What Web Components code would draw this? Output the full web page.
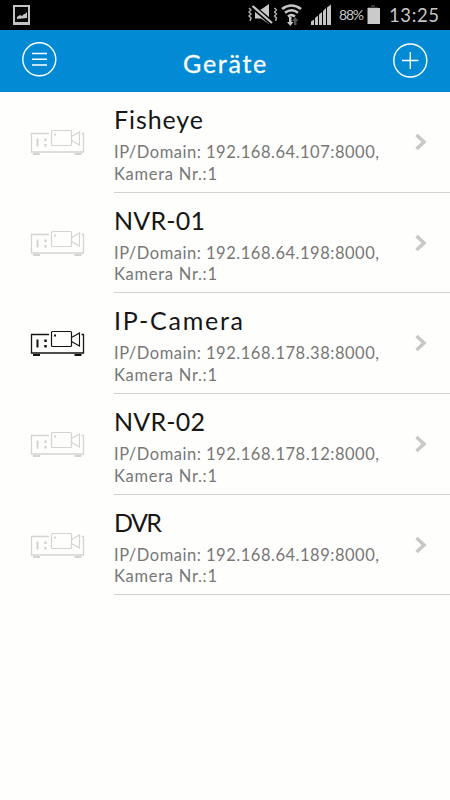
<!DOCTYPE html>
<html lang="de">
<head>
<meta charset="utf-8">
<title>Geräte</title>
<style>
    body {
        margin: 0;
        background: #fefefd;
        font-family: Lato, "Open Sans", sans-serif;
    }
</style>
</head>
<body>
<device-app></device-app>

<script>
// single line of text, spaced out to the width given in the attribute
class FitText extends HTMLElement {
    constructor() {
        super();
        this.attachShadow({ mode: "open" });
        this.shadowRoot.innerHTML = `
            <style>
                :host { display: block; white-space: nowrap; }
                span { display: inline-block; }
            </style>
            <span><slot></slot></span>`;
    }

    connectedCallback() {
        const span = this.shadowRoot.querySelector("span");
        const width = Number(this.getAttribute("width"));
        const count = this.textContent.length;
        const gap = (width - span.getBoundingClientRect().width) / (count - 1);
        span.style.letterSpacing = gap + "px";
        this.style.width = width + "px";
    }
}

class StatusBar extends HTMLElement {
    constructor() {
        super();
        this.attachShadow({ mode: "open" });
        this.shadowRoot.innerHTML = `
            <style>
                :host { display: flex; height: 30px; background: #000; color: #c6c6c6; }
                svg { display: block; flex: none; }
                .picture { margin-right: auto; }
                fit-text { line-height: 30px; }
                .battery { font-size: 14px; }
                .time { font-size: 18.5px; margin-left: 9px; line-height: 31px; }
            </style>
            <svg class="picture" width="40" height="30">
                <rect x="14" y="6" width="15" height="18" fill="#050505" stroke="#c4c4c4" stroke-width="2"/>
                <path d="M14 23.5h15" stroke="#c4c4c4" stroke-width="3"/>
                <path d="M17 19v-2l3-2 2 1 2-2 1 0 2-2v6z" fill="#c4c4c4"/>
            </svg>
            <svg width="99" height="30" fill="#c6c6c6">
                <path d="M15 9.500h6l8-5.500v20l-8-5.500h-6z"/>
                <path d="M13 7l19 16" stroke="#000" stroke-width="5"/>
                <path d="M12.500 6l19.500 17" stroke="#c6c6c6" stroke-width="2.200"/>
                <path d="M9 8l2 2-2 2 2 2-2 2 2 2-1 3M34.500 8l2 2-2 2 2 2-2 2 2 2-1 3" fill="none" stroke="#b0b0b0" stroke-width="1.4"/>
                <g fill="none" stroke="#c6c6c6" stroke-width="2.500">
                    <path d="M42 9q9.500-7 19 0M45 12.800q6.500-5 13 0M48 16.500q3.500-2.800 7 0"/>
                </g>
                <path d="M49 17h2.500v5h2l-3.200 4-3.300-4h2z"/>
                <path d="M54 25v-4h-2l3.200-4 3.300 4h-2v4z" fill="#555"/>
                <path d="M71 21.500l3-2v5.500h-3zM75 18l3-2.500v9.500h-3zM79 14.500l3-2.500v13h-3zM83 11l3-3v17h-3zM87 7.500l4-3v20.500h-4z"/>
            </svg>
            <fit-text class="battery" width="25">88%</fit-text>
            <svg width="16" height="30">
                <path d="M7 5h4v2h3v2h-10v-2h3z" fill="#353535"/>
                <path d="M3.500 8h12.500v16h-12.500z" fill="#cacaca"/>
            </svg>
            <fit-text class="time" width="50">13:25</fit-text>
            <svg width="11" height="30"></svg>`;
    }
}

class TitleBar extends HTMLElement {
    constructor() {
        super();
        this.attachShadow({ mode: "open" });
        this.shadowRoot.innerHTML = `
            <style>
                :host {
                    display: flex; justify-content: space-between; box-sizing: border-box;
                    height: 62px; padding: 0 22px; color: #fff;
                    background: #028bd4;
                }
                svg { display: block; fill: none; stroke: #fff; stroke-width: 1.4; }
                .title {
                    font-size: 25px; line-height: 66px; letter-spacing: 1.7px;
                    margin-right: -1px; -webkit-text-stroke: 0.3px #fff;
                }
            </style>
            <svg width="35" height="62">
                <circle cx="17.300" cy="29.300" r="16.500"/>
                <path d="M10 23.500h15M10 29.300h15M10 35h15"/>
            </svg>
            <div class="title"><slot></slot></div>
            <svg width="35" height="62">
                <circle cx="17.300" cy="30.500" r="16.500"/>
                <path d="M9 30.500h16.500M17.300 22v17"/>
            </svg>`;
    }
}

const deviceTemplate = document.createElement("template");

deviceTemplate.innerHTML = `
    <style>
        :host { display: flex; height: 100.700px; color: #d4d4d4; }
        :host([active]) { color: #141414; }
        .icon { flex: none; width: 114px; height: 100px; fill: none; stroke: currentColor; }
        .body {
            flex: 1; display: flex; justify-content: space-between; box-sizing: border-box;
            border-bottom: 1px solid #d2d2d2;
        }
        .name { margin-top: 11px; font-size: 25px; line-height: 32px; color: #161616; }
        .info { font-size: 16.500px; line-height: 21.500px; color: #777; }
        .address { margin-top: 7px; }
        .arrow { flex: none; width: 40px; height: 100px; fill: none; stroke: #c8c8c8; stroke-width: 3.500; }
    </style>
    <svg class="icon" viewBox="0 0 114 100">
        <path d="M49 41.500H31.500v18.500h52v-18.500h-2" stroke-width="1.300"/>
        <rect x="51.500" y="38.500" width="20" height="15" rx="1" stroke-width="1.200"/>
        <path d="M71.500 44.500l8-4.500v13l-8-4.500" stroke-width="1.100"/>
        <path d="M37.500 46.500v8" stroke-width="2"/>
        <path d="M45.500 46.500v2.500M45.500 52v2.500" stroke-width="2.500"/>
        <path d="M54 42.500h2" stroke-width="2"/>
        <path d="M33 62h7M74.500 62h7" stroke-width="2"/>
    </svg>
    <div class="body">
        <div>
            <div class="name"></div>
            <div class="info address"></div>
            <div class="info camera"></div>
        </div>
        <svg class="arrow" viewBox="0 0 40 100">
            <path d="M6.500 43l7.500 7-7.500 7"/>
        </svg>
    </div>`;

class DeviceRow extends HTMLElement {
    constructor() {
        super();
        this.attachShadow({ mode: "open" });
        this.shadowRoot.appendChild(deviceTemplate.content.cloneNode(true));
    }

    setData(device) {
        this.toggleAttribute("active", Boolean(device.active));
        this.setLine(".name", device.name, device.width);
        this.setLine(".address", "IP/Domain: " + device.address + ",", 265);
        this.setLine(".camera", "Kamera Nr.:1", 103);
    }

    setLine(selector, text, width) {
        const line = document.createElement("fit-text");
        line.setAttribute("width", width);
        line.textContent = text;
        this.shadowRoot.querySelector(selector).appendChild(line);
    }
}

const devices = [
    { name: "Fisheye", width: 89, address: "192.168.64.107:8000" },
    { name: "NVR-01", width: 91, address: "192.168.64.198:8000" },
    { name: "IP-Camera", width: 129, address: "192.168.178.38:8000", active: true },
    { name: "NVR-02", width: 91, address: "192.168.178.12:8000" },
    { name: "DVR", width: 48, address: "192.168.64.189:8000" },
];

class DeviceApp extends HTMLElement {
    constructor() {
        super();
        this.attachShadow({ mode: "open" });
        this.shadowRoot.innerHTML = `
            <style>
                :host { display: block; width: 450px; height: 800px; overflow: hidden; }
            </style>
            <status-bar></status-bar>
            <title-bar>Geräte</title-bar>
            <main></main>`;
    }

    connectedCallback() {
        const main = this.shadowRoot.querySelector("main");
        devices.forEach((device) => {
            const row = document.createElement("device-row");
            main.appendChild(row);
            row.setData(device);
        });
    }
}

customElements.define("fit-text", FitText);
customElements.define("status-bar", StatusBar);
customElements.define("title-bar", TitleBar);
customElements.define("device-row", DeviceRow);
customElements.define("device-app", DeviceApp);
</script>
</body>
</html>
